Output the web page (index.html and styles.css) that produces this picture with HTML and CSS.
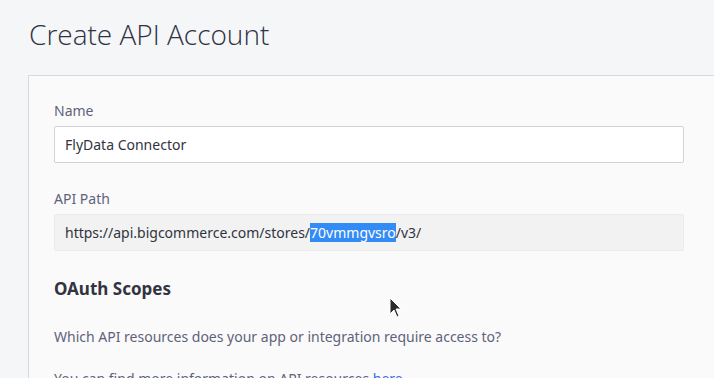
FILE: index.html
```html
<!DOCTYPE html>
<html lang="en">
<head>
  <meta charset="UTF-8" />
  <title>Create API Account</title>
  <link rel="stylesheet" href="styles.css">
</head>
<body>
  <div class="page">
    <h1 class="page-title">Create API Account</h1>

    <div class="panel">
      <div class="field">
        <label class="field-label">Name</label>
        <div class="input">FlyData Connector</div>
      </div>

      <div class="field">
        <label class="field-label">API Path</label>
        <div class="input readonly">https://api.bigcommerce.com/stores/<span class="selected">70vmmgvsro</span>/v3/</div>
      </div>

      <h2 class="section-title">OAuth Scopes</h2>
      <p class="text">Which API resources does your app or integration require access to?</p>
      <p class="text text-more">You can find more information on API resources <a href="#">here</a>.</p>
    </div>
  </div>

  <svg class="cursor" width="14" height="22" viewBox="0 0 14 22">
    <path d="M1 1 L1 17 L5 13 L8 20 L10 19 L7 12 L12 12 Z" fill="#2b2b2b" stroke="#fff" stroke-width="1"/>
  </svg>
</body>
</html>
```

FILE: styles.css
```css
body {
  margin: 0;
  background-color: #f5f6f8;
  font-family: "Noto Sans", "Open Sans", sans-serif;
  color: #313440;
  overflow: hidden;
  height: 378px;
}

.page {
  padding: 14px 0 0 28px;
}

.page-title {
  font-family: "Open Sans", sans-serif;
  font-weight: 300;
  font-size: 28px;
  line-height: 40px;
  color: #2f3241;
  margin: 0 0 21px 1px;
}

.panel {
  background-color: #fafafa;
  border: 1px solid #d6d9e3;
  border-right: none;
  padding: 25px 0 0 25px;
  height: 400px;
}

.field {
  margin-bottom: 26px;
}

.field-label {
  display: block;
  font-size: 14px;
  line-height: 20px;
  color: #5e637a;
  margin-bottom: 5px;
}

.input {
  width: 608px;
  height: 35px;
  line-height: 35px;
  padding: 0 10px;
  background: #fff;
  border: 1px solid #d3d3d3;
  border-radius: 2px;
  font-size: 14px;
  color: #313440;
}

.input.readonly {
  background: #f2f2f2;
  border-color: #ebebeb;
}

.selected {
  background: #338bf5;
  color: #fff;
}

.section-title {
  font-size: 17px;
  font-weight: 700;
  line-height: 24px;
  margin: 22px 0 0 0;
  color: #313440;
}

.text {
  font-size: 14px;
  line-height: 20px;
  color: #5e637a;
  margin: 26px 0 0 0;
}

.text-more {
  margin-top: 22px;
}

.text a {
  color: #3c64f4;
  text-decoration: none;
}

.cursor {
  position: absolute;
  left: 389px;
  top: 297px;
}
```
